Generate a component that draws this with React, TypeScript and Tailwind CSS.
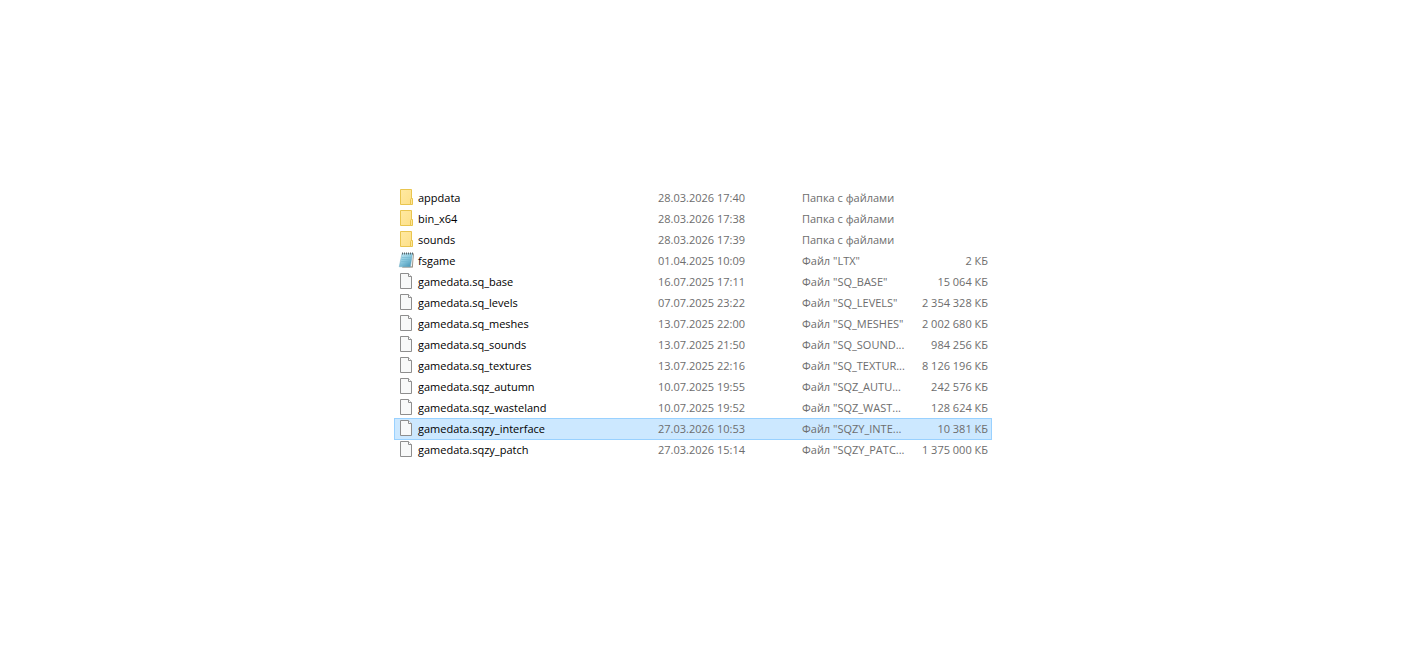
import { useState } from "react";
import clsx from "clsx";

type FileKind = "folder" | "notepad" | "file";

interface FileEntry {
    name: string;
    modified: string;
    type: string;
    size?: string;
    kind: FileKind;
}

const files: FileEntry[] = [
    { name: "appdata", modified: "28.03.2026 17:40", type: "Папка с файлами", kind: "folder" },
    { name: "bin_x64", modified: "28.03.2026 17:38", type: "Папка с файлами", kind: "folder" },
    { name: "sounds", modified: "28.03.2026 17:39", type: "Папка с файлами", kind: "folder" },
    { name: "fsgame", modified: "01.04.2025 10:09", type: 'Файл "LTX"', size: "2 КБ", kind: "notepad" },
    { name: "gamedata.sq_base", modified: "16.07.2025 17:11", type: 'Файл "SQ_BASE"', size: "15 064 КБ", kind: "file" },
    { name: "gamedata.sq_levels", modified: "07.07.2025 23:22", type: 'Файл "SQ_LEVELS"', size: "2 354 328 КБ", kind: "file" },
    { name: "gamedata.sq_meshes", modified: "13.07.2025 22:00", type: 'Файл "SQ_MESHES"', size: "2 002 680 КБ", kind: "file" },
    { name: "gamedata.sq_sounds", modified: "13.07.2025 21:50", type: 'Файл "SQ_SOUND...', size: "984 256 КБ", kind: "file" },
    { name: "gamedata.sq_textures", modified: "13.07.2025 22:16", type: 'Файл "SQ_TEXTUR...', size: "8 126 196 КБ", kind: "file" },
    { name: "gamedata.sqz_autumn", modified: "10.07.2025 19:55", type: 'Файл "SQZ_AUTU...', size: "242 576 КБ", kind: "file" },
    { name: "gamedata.sqz_wasteland", modified: "10.07.2025 19:52", type: 'Файл "SQZ_WAST...', size: "128 624 КБ", kind: "file" },
    { name: "gamedata.sqzy_interface", modified: "27.03.2026 10:53", type: 'Файл "SQZY_INTE...', size: "10 381 КБ", kind: "file" },
    { name: "gamedata.sqzy_patch", modified: "27.03.2026 15:14", type: 'Файл "SQZY_PATC...', size: "1 375 000 КБ", kind: "file" },
];

function FolderIcon() {
    return (
        <svg viewBox="0 0 16 16" className="h-4 w-4 shrink-0" aria-hidden="true">
            <defs>
                <linearGradient id="folder" x1="0" y1="0" x2="1" y2="1">
                    <stop offset="0" stopColor="#ffe9a2" />
                    <stop offset="1" stopColor="#fde08a" />
                </linearGradient>
            </defs>
            <path d="M2.5.5h11v15h-11z" fill="url(#folder)" stroke="#e9c54f" />
            <path d="M12.5 15.5v-5l.5-1h1.5v6z" fill="#ffe797" stroke="#e9c54f" />
        </svg>
    );
}

function NotepadIcon() {
    return (
        <svg viewBox="0 0 16 16" className="h-4 w-4 shrink-0" aria-hidden="true">
            <defs>
                <linearGradient id="notepad" x1="0" y1="0" x2=".7" y2="1">
                    <stop offset="0" stopColor="#c9eaf4" />
                    <stop offset=".5" stopColor="#8fcbe0" />
                    <stop offset="1" stopColor="#4f9dbd" />
                </linearGradient>
            </defs>
            {/* back cover and page edges */}
            <path d="M14.2 1.5h1.6L14.8 15.5H4z" fill="#857b6c" />
            <path d="M13.8 2h1.3l-1 12.5H4z" fill="#f1f4f4" />
            {/* front page */}
            <path d="M4 1.5h10.5L12.3 14.8H1.2z" fill="url(#notepad)" stroke="#5b9eb8" strokeWidth=".4" />
            <path d="M4 5.5h8.8M3.700 7.5h8.8M3.300 9.5h8.8" stroke="#71b5cf" strokeWidth=".6" />
            {/* spiral binding */}
            <path d="M4 1.5h11" stroke="#59656a" strokeDasharray="1 1" strokeWidth="2" />
        </svg>
    );
}

function DocumentIcon() {
    return (
        <svg viewBox="0 0 16 16" className="h-4 w-4 shrink-0" aria-hidden="true">
            <path d="M2.5.5h8l3 3v12h-11z" fill="#f8f9f9" stroke="#8e8e8e" />
            <path d="M10.5.5v3h3" fill="#fff" stroke="#8e8e8e" />
        </svg>
    );
}

function FileIcon({ kind }: { kind: FileKind }) {
    if (kind === "folder") return <FolderIcon />;
    if (kind === "notepad") return <NotepadIcon />;
    return <DocumentIcon />;
}

export default function App() {
    const [selected, setSelected] = useState("gamedata.sqzy_interface");

    return (
        <main className="min-h-screen bg-white pt-[187px] pl-[394px] font-['Open_Sans',sans-serif] text-[11px] leading-[17px]">
            <table className="w-full max-w-[598px] table-fixed border-collapse text-left whitespace-nowrap">
                <colgroup>
                    <col />
                    <col className="w-36" />
                    <col className="w-[110px]" />
                    <col className="w-20" />
                </colgroup>
                <tbody>
                    {files.map((file) => {
                        const isSelected = file.name === selected;
                        return (
                            <tr
                                key={file.name}
                                onClick={() => setSelected(file.name)}
                                aria-selected={isSelected}
                                className={clsx(
                                    "h-[21px] cursor-default",
                                    isSelected ? "border-y border-[#99d1ff] bg-[#cce8ff]" : "hover:bg-[#e5f3ff]"
                                )}
                            >
                                <td className={clsx("p-0 pl-1 text-black", isSelected && "shadow-[inset_1px_0_#99d1ff]")}>
                                    <div className="flex items-start gap-1">
                                        <FileIcon kind={file.kind} />
                                        <span>{file.name}</span>
                                    </div>
                                </td>
                                <td className="p-0 text-[#6d6d6d]">{file.modified}</td>
                                <td className="p-0 text-[#6d6d6d]">{file.type}</td>
                                <td className={clsx("p-0 pr-1 text-right text-[#6d6d6d]", isSelected && "shadow-[inset_-1px_0_#99d1ff]")}>
                                    {file.size}
                                </td>
                            </tr>
                        );
                    })}
                </tbody>
            </table>
        </main>
    );
}
